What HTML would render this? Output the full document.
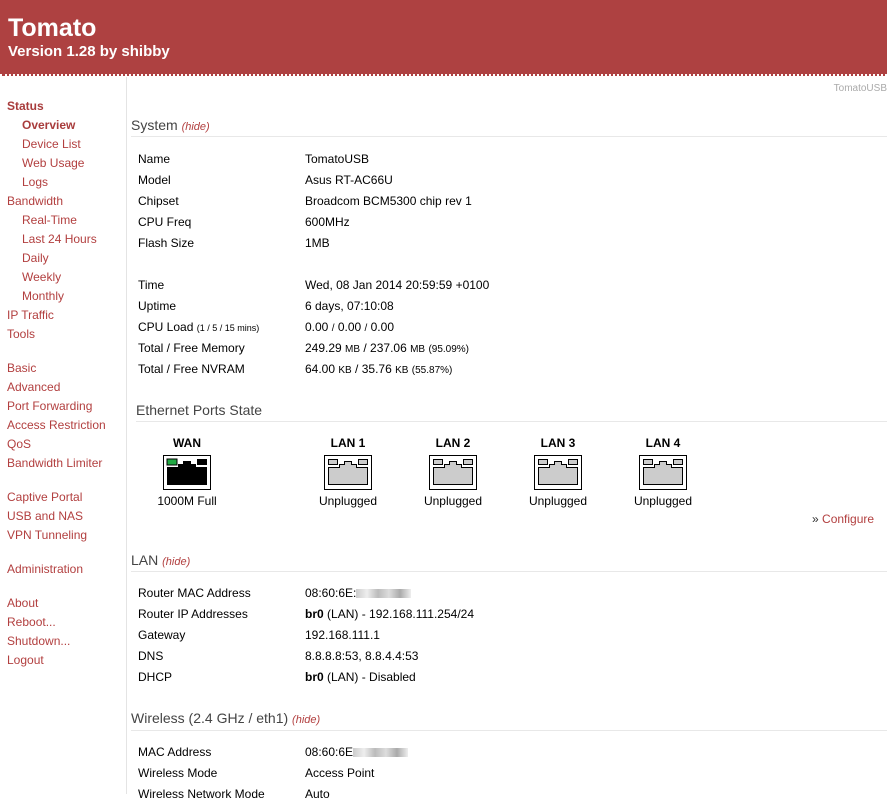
<!DOCTYPE html>
<html><head><meta charset="utf-8"><style>
body{margin:0;width:887px;height:794px;overflow:hidden;background:#fff;font-family:"Liberation Sans",Arial,sans-serif;font-size:12px;color:#000;position:relative}
.a{position:absolute;line-height:14px;white-space:nowrap;margin-top:1px}
#hd{position:absolute;left:0;top:0;width:887px;height:74px;background:#ae4141;border-bottom:2px dotted #fff}
#hd .t{position:absolute;left:8px;top:13px;font-size:25px;font-weight:bold;color:#fff;line-height:30px}
#hd .v{position:absolute;left:8px;top:43px;font-size:15px;font-weight:bold;color:#fff;line-height:18px}
#vl{position:absolute;left:126px;top:77px;width:1px;height:717px;background:#e4e4e4}
.nav{color:#b23f3f}
.nb{color:#a83c3c;font-weight:bold}
.h{color:#444;font-size:14px;line-height:16px}
.h i{color:#b23f3f;font-size:11px}
.ln{position:absolute;height:1px;background:#e8e8e8;right:0}
.s{font-size:10px}
.sm{font-size:9px}
.p{position:absolute;text-align:center;width:100px;margin-top:1px}
.p b{display:block;font-size:12px;line-height:14px}
.p span{display:block;line-height:14px}
.blur{display:inline-block;width:55px;height:9px;background:linear-gradient(90deg,#ccc,#eee 20%,#bbb 40%,#ddd 60%,#aaa 80%,#eee);vertical-align:middle}
</style></head><body>
<div id="hd"><div class="t">Tomato</div><div class="v">Version 1.28 by shibby</div></div>
<div id="vl"></div>
<div class="a" style="right:0;top:81px;font-size:10px;color:#aaa">TomatoUSB</div>

<div class="a nb" style="left:7px;top:98px">Status</div>
<div class="a nb" style="left:22px;top:117px">Overview</div>
<div class="a nav" style="left:22px;top:136px">Device List</div>
<div class="a nav" style="left:22px;top:155px">Web Usage</div>
<div class="a nav" style="left:22px;top:174px">Logs</div>
<div class="a nav" style="left:7px;top:193px">Bandwidth</div>
<div class="a nav" style="left:22px;top:212px">Real-Time</div>
<div class="a nav" style="left:22px;top:231px">Last 24 Hours</div>
<div class="a nav" style="left:22px;top:250px">Daily</div>
<div class="a nav" style="left:22px;top:269px">Weekly</div>
<div class="a nav" style="left:22px;top:288px">Monthly</div>
<div class="a nav" style="left:7px;top:307px">IP Traffic</div>
<div class="a nav" style="left:7px;top:326px">Tools</div>
<div class="a nav" style="left:7px;top:360px">Basic</div>
<div class="a nav" style="left:7px;top:379px">Advanced</div>
<div class="a nav" style="left:7px;top:398px">Port Forwarding</div>
<div class="a nav" style="left:7px;top:417px">Access Restriction</div>
<div class="a nav" style="left:7px;top:436px">QoS</div>
<div class="a nav" style="left:7px;top:455px">Bandwidth Limiter</div>
<div class="a nav" style="left:7px;top:489px">Captive Portal</div>
<div class="a nav" style="left:7px;top:508px">USB and NAS</div>
<div class="a nav" style="left:7px;top:527px">VPN Tunneling</div>
<div class="a nav" style="left:7px;top:561px">Administration</div>
<div class="a nav" style="left:7px;top:595px">About</div>
<div class="a nav" style="left:7px;top:614px">Reboot...</div>
<div class="a nav" style="left:7px;top:633px">Shutdown...</div>
<div class="a nav" style="left:7px;top:652px">Logout</div>

<div class="a h" style="left:131px;top:116px">System <i>(hide)</i></div>
<div class="ln" style="left:131px;top:136px"></div>
<div class="a" style="left:138px;top:151px">Name</div><div class="a" style="left:305px;top:151px">TomatoUSB</div>
<div class="a" style="left:138px;top:172px">Model</div><div class="a" style="left:305px;top:172px">Asus RT-AC66U</div>
<div class="a" style="left:138px;top:193px">Chipset</div><div class="a" style="left:305px;top:193px">Broadcom BCM5300 chip rev 1</div>
<div class="a" style="left:138px;top:214px">CPU Freq</div><div class="a" style="left:305px;top:214px">600MHz</div>
<div class="a" style="left:138px;top:235px">Flash Size</div><div class="a" style="left:305px;top:235px">1MB</div>
<div class="a" style="left:138px;top:277px">Time</div><div class="a" style="left:305px;top:277px">Wed, 08 Jan 2014 20:59:59 +0100</div>
<div class="a" style="left:138px;top:298px">Uptime</div><div class="a" style="left:305px;top:298px">6 days, 07:10:08</div>
<div class="a" style="left:138px;top:319px">CPU Load <span class="sm">(1 / 5 / 15 mins)</span></div><div class="a" style="left:305px;top:319px">0.00 <span class="s">/</span> 0.00 <span class="s">/</span> 0.00</div>
<div class="a" style="left:138px;top:340px">Total / Free Memory</div><div class="a" style="left:305px;top:340px">249.29 <span class="s">MB</span> / 237.06 <span class="s">MB</span> <span class="s">(95.09%)</span></div>
<div class="a" style="left:138px;top:361px">Total / Free NVRAM</div><div class="a" style="left:305px;top:361px">64.00 <span class="s">KB</span> / 35.76 <span class="s">KB</span> <span class="s">(55.87%)</span></div>

<div class="a h" style="left:136px;top:401px">Ethernet Ports State</div>
<div class="ln" style="left:136px;top:421px"></div>

<svg width="0" height="0" style="position:absolute"><defs>
<g id="pg"><rect x="0.5" y="0.5" width="47" height="34" fill="#fff" stroke="#000"/><rect x="4.5" y="4.5" width="9" height="5" fill="#ccc" stroke="#000"/><rect x="34.5" y="4.5" width="9" height="5" fill="#ccc" stroke="#000"/><path d="M4.5 29.5V12.5H15.5V9.5H20.5V6.5H27.5V9.5H32.5V12.5H43.5V29.5Z" fill="#ccc" stroke="#000"/></g>
</defs></svg>
<div class="p" style="left:137px;top:435px"><b>WAN</b>
<svg width="48" height="35" style="display:block;margin:5px auto 4px"><rect x="0.5" y="0.5" width="47" height="34" fill="#fff" stroke="#000"/><rect x="4" y="4" width="10" height="6" fill="#22aa44" stroke="#000"/><rect x="34" y="4" width="10" height="6" fill="#000"/><path d="M4 30V12H15V9H20V6H28V9H33V12H44V30Z" fill="#000"/></svg>
<span>1000M Full</span></div>
<div class="p" style="left:298px;top:435px"><b>LAN 1</b><svg width="48" height="35" style="display:block;margin:5px auto 4px"><use href="#pg"/></svg><span>Unplugged</span></div>
<div class="p" style="left:403px;top:435px"><b>LAN 2</b><svg width="48" height="35" style="display:block;margin:5px auto 4px"><use href="#pg"/></svg><span>Unplugged</span></div>
<div class="p" style="left:508px;top:435px"><b>LAN 3</b><svg width="48" height="35" style="display:block;margin:5px auto 4px"><use href="#pg"/></svg><span>Unplugged</span></div>
<div class="p" style="left:613px;top:435px"><b>LAN 4</b><svg width="48" height="35" style="display:block;margin:5px auto 4px"><use href="#pg"/></svg><span>Unplugged</span></div>
<div class="a nav" style="left:812px;top:511px"><span style="color:#333">»</span> Configure</div>

<div class="a h" style="left:131px;top:551px">LAN <i>(hide)</i></div>
<div class="ln" style="left:131px;top:571px"></div>
<div class="a" style="left:138px;top:585px">Router MAC Address</div><div class="a" style="left:305px;top:585px">08:60:6E:<span class="blur"></span></div>
<div class="a" style="left:138px;top:606px">Router IP Addresses</div><div class="a" style="left:305px;top:606px"><b>br0</b> (LAN) - 192.168.111.254/24</div>
<div class="a" style="left:138px;top:627px">Gateway</div><div class="a" style="left:305px;top:627px">192.168.111.1</div>
<div class="a" style="left:138px;top:648px">DNS</div><div class="a" style="left:305px;top:648px">8.8.8.8:53, 8.8.4.4:53</div>
<div class="a" style="left:138px;top:669px">DHCP</div><div class="a" style="left:305px;top:669px"><b>br0</b> (LAN) - Disabled</div>

<div class="a h" style="left:131px;top:709px">Wireless (2.4 GHz / eth1) <i>(hide)</i></div>
<div class="ln" style="left:131px;top:730px"></div>
<div class="a" style="left:138px;top:744px">MAC Address</div><div class="a" style="left:305px;top:744px">08:60:6E<span class="blur"></span></div>
<div class="a" style="left:138px;top:765px">Wireless Mode</div><div class="a" style="left:305px;top:765px">Access Point</div>
<div class="a" style="left:138px;top:786px">Wireless Network Mode</div><div class="a" style="left:305px;top:786px">Auto</div>
</body></html>
